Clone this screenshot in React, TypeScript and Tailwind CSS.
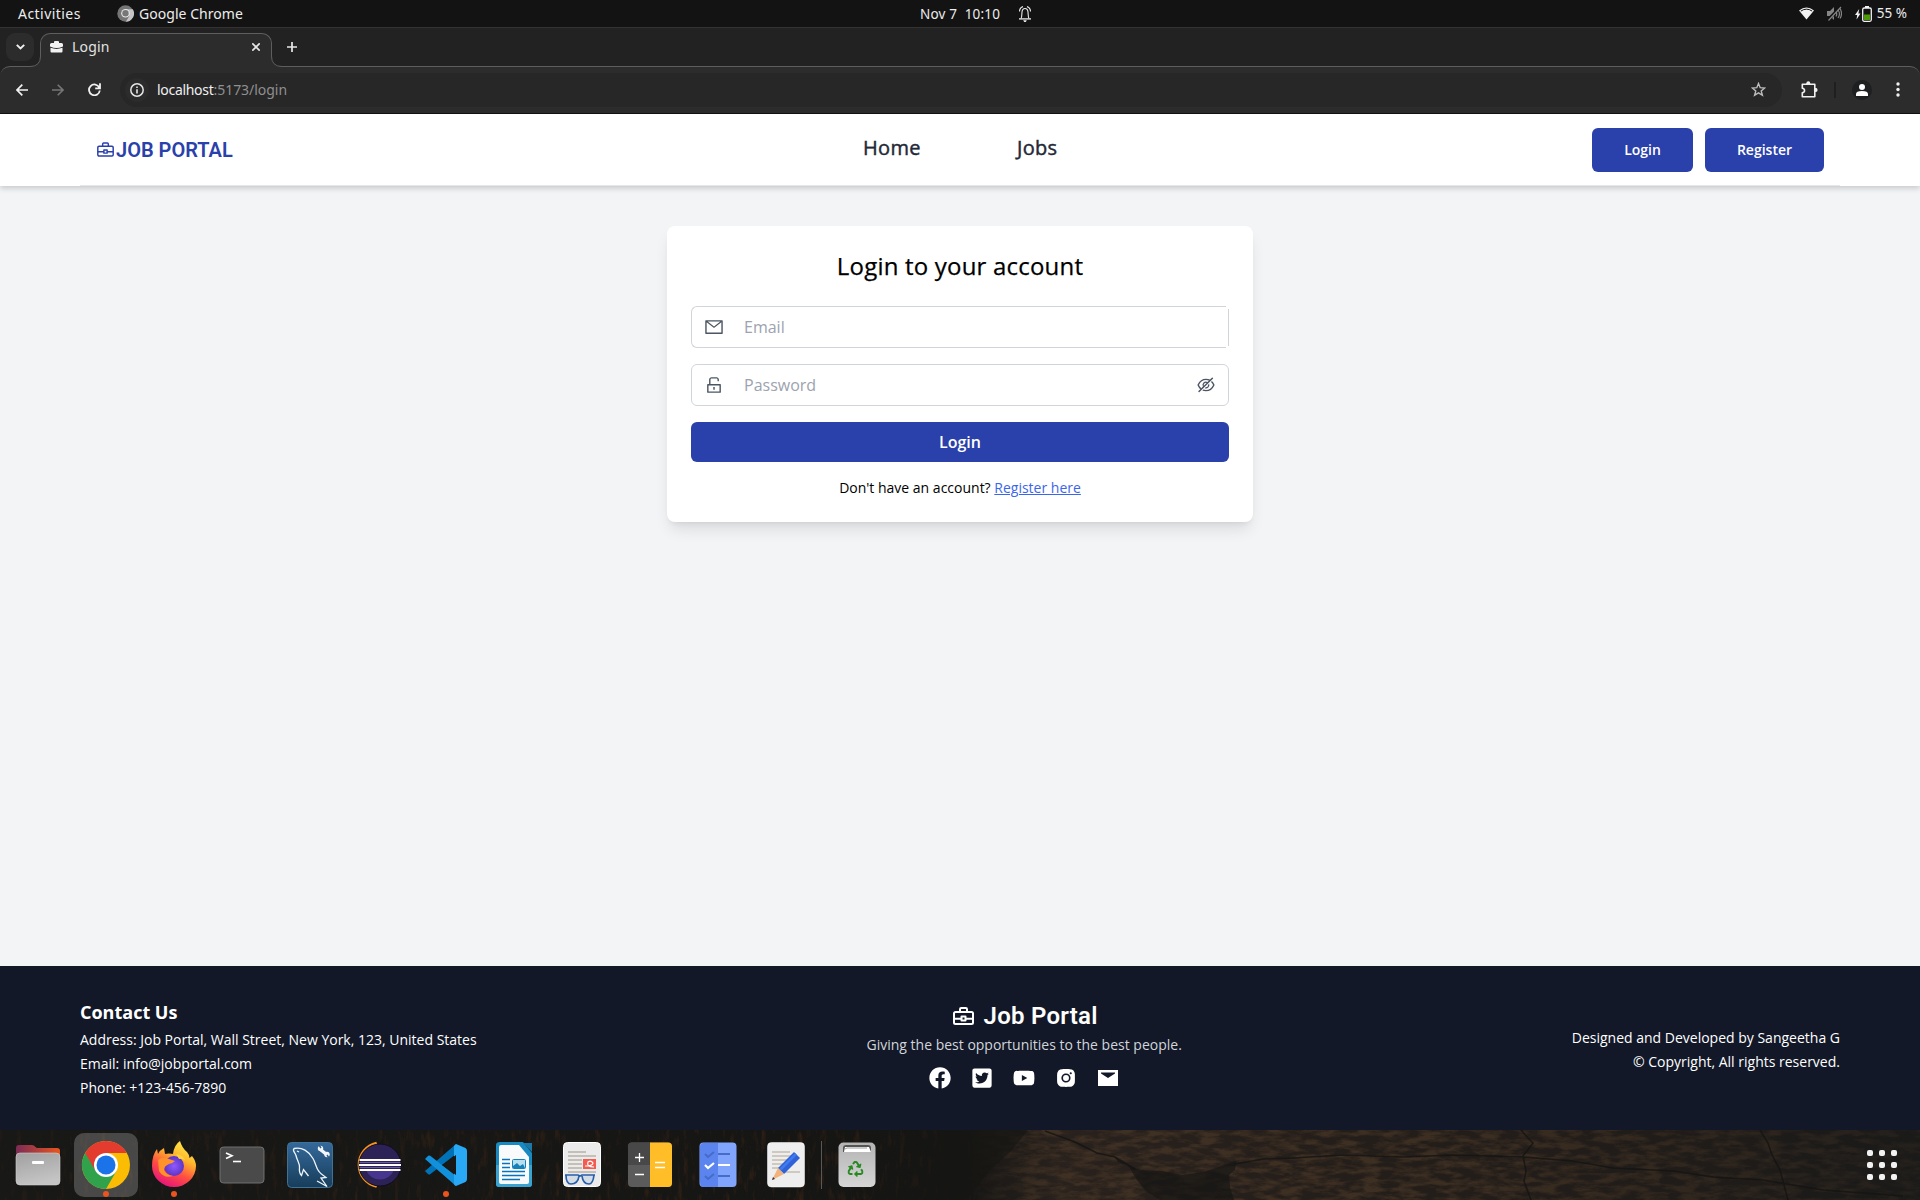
import * as React from 'react';
import { AiOutlineMail, AiOutlineUnlock, AiOutlineEyeInvisible } from 'react-icons/ai';
import { FaFacebook, FaTwitterSquare, FaYoutube, FaRecycle } from 'react-icons/fa';
import { BiLogoInstagramAlt } from 'react-icons/bi';

function Briefcase({ className, stroke = 2 }: { className?: string; stroke?: number }) {
  return (
    <svg viewBox="0 0 21 18" className={className} fill="none" stroke="currentColor" strokeWidth={stroke} strokeLinejoin="round">
      <path d="M2.5 5h16a1.5 1.5 0 0 1 1.5 1.5v9a1.5 1.5 0 0 1-1.5 1.5h-16A1.5 1.5 0 0 1 1 15.500v-9A1.500 1.500 0 0 1 2.500 5Z" />
      <path d="M7 5V2.200Q7 1 8.200 1h4.600Q14 1 14 2.200V5M1 11.700h7M13 11.700h7M8.500 9.500h4v4h-4Z" />
    </svg>
  );
}

function SystemBar() {
  return (
    <div className="grid h-[28px] grid-cols-3 border-b border-[#333333] bg-[#131313] font-['Noto_Sans',sans-serif] text-[14px] leading-[27px] text-[#ededed]">
      <div className="flex items-center pl-[18px]">
        <span className="w-[99px] text-[14px] tracking-[0.45px]">Activities</span>
        <svg className="mr-[5px] h-[17px] w-[17px] shrink-0" viewBox="0 0 17 17">
          <circle cx="8.500" cy="8.500" r="8.200" fill="#757575" />
          <path d="M8.500 4.200h7.300a8.200 8.200 0 0 1-7 12.500L12.300 11Z" fill="#c4c4c4" />
          <circle cx="8.500" cy="8.300" r="4.300" fill="#e9e9e9" />
          <circle cx="8.500" cy="8.300" r="3.200" fill="#777777" />
        </svg>
        <span className="tracking-[0.04px]">Google Chrome</span>
      </div>
      <div className="flex items-center pl-[280px]">
        <span className="w-[99px] whitespace-pre text-[13.5px] leading-[26px] tracking-[0.2px]">Nov 7  10:10</span>
        <svg className="h-[16px] w-[12px]" viewBox="0 0 12 16" fill="none" stroke="#ededed" strokeWidth="1.100">
          <path d="M0 12.900h12" strokeWidth="1.300" />
          <path d="M2 12.500c1-1.200.8-4.500 1-6.500.2-2 1.300-3.500 3-3.500s2.800 1.500 3 3.500c.2 2 0 5.300 1 6.500M.5 5.500C.6 3 2 1.200 4 .6M11.500 5.500C11.400 3 10 1.200 8 .6" />
          <path d="M4.200 14.200h3.600L6.800 16H5.200Z" fill="#ededed" stroke="none" />
        </svg>
      </div>
      <div className="flex items-center justify-end pr-[13px]">
        <svg className="mr-[13px] h-[13px] w-[15px]" viewBox="0 0 15 13">
          <path d="M7.500 12.500L0 3.500Q7.500-2.500 15 3.500Z" fill="#f2f2f2" />
          <path d="M1.800 4.100Q7.500.2 13.200 4.100" fill="none" stroke="#131313" strokeWidth="1" />
        </svg>
        <svg className="mr-[13px] h-[15px] w-[15px]" viewBox="0 0 15 15" fill="none" stroke="#858585" strokeWidth="1.200">
          <path d="M0 5h3l4-4v13l-4-4H0Z" fill="#858585" stroke="none" />
          <path d="M.5 14.500L14 .5" stroke="#131313" strokeWidth="3" />
          <path d="M1.500 14.500L14 1M9 5.500q1.500 2.500 0 5M11 4q3 4 0 8M13 2.500q3 5 0 10" />
        </svg>
        <svg className="mr-[5px] h-[16px] w-[17px]" viewBox="0 0 17 16">
          <path d="M4.200 3L0 9h2.200L1.500 13.500 5.500 7.500H3.400Z" fill="#f2f2f2" />
          <rect x="7.700" y="2" width="8.600" height="13.300" rx="1.500" fill="none" stroke="#f2f2f2" strokeWidth="1.300" />
          <path d="M10 0h4v2h-4Z" fill="#f2f2f2" />
          <rect x="9" y="8.500" width="6" height="5.500" fill="#4e9a06" />
        </svg>
        <span className="text-[13.500px]">55 %</span>
      </div>
    </div>
  );
}

function Browser() {
  return (
    <div className="h-[86px] bg-[#222222] font-['Noto_Sans',sans-serif] text-[14px]">
      <div className="flex h-[38px] pl-[6px] pt-[5px]">
        <div className="flex h-[28px] w-[28px] items-center justify-center rounded-[9px] bg-[#2c2c2c]">
          <svg className="h-[6px] w-[9px]" viewBox="0 0 9 6" fill="none" stroke="#f0f0f0" strokeWidth="1.900"><path d="M.8.800L4.500 4.500 8.200.8" /></svg>
        </div>
        <div className="relative z-10 ml-[6px] flex h-[34px] w-[232px] items-center rounded-t-[10px] border border-b-0 border-[#5e5e5e] bg-[#2c2c2c] pb-[7px] pl-[9px] text-[#e3e3e3]">
          <svg className="absolute -left-[11px] bottom-0 h-[11px] w-[12px]" viewBox="0 0 12 11"><path d="M0 10.500Q10.500 10.500 10.500 0H12V11H0Z" fill="#2c2c2c" /><path d="M0 10.500Q10.500 10.500 10.500 0" fill="none" stroke="#5e5e5e" /></svg>
          <svg className="absolute -right-[11px] bottom-0 h-[11px] w-[12px]" viewBox="0 0 12 11"><path d="M12 10.500Q1.500 10.500 1.500 0H0V11H12Z" fill="#2c2c2c" /><path d="M12 10.500Q1.500 10.500 1.500 0" fill="none" stroke="#5e5e5e" /></svg>
          <svg className="h-[12px] w-[13px]" viewBox="0 0 13 12" fill="#f1f1f1"><path d="M4 2V1Q4 0 5 0h3q1 0 1 1v1h2.500Q13 2 13 3.500v2Q9.500 7 6.500 7T0 5.500v-2Q0 2 1.500 2Z" /><path d="M.5 6.800Q6.500 9 12.500 6.800V10.500Q12.500 11.500 11.500 11.500h-10Q.5 11.500.5 10.500Z" /></svg>
          <span className="ml-[9px] pb-px leading-[18px] tracking-[0.2px]">Login</span>
          <svg className="ml-auto mr-[11px] h-[8px] w-[8px]" viewBox="0 0 8 8" stroke="#e8e8e8" strokeWidth="1.600"><path d="M.3.300l7.400 7.400M7.700.300L.3 7.700" /></svg>
        </div>
        <svg className="ml-[15px] mt-[9px] h-[10px] w-[10px]" viewBox="0 0 10 10" stroke="#e8e8e8" strokeWidth="1.700"><path d="M5 0v10M0 5h10" /></svg>
      </div>
      <div className="flex h-[48px] items-center rounded-t-[10px] border-b border-t border-b-[#111111] border-t-[#5e5e5e] bg-[#2c2c2c] pb-px pl-[16px] pr-[20px] text-[#f1f1f1]">
        <svg className="h-[12px] w-[12px]" viewBox="0 0 12 12" fill="none" stroke="currentColor" strokeWidth="1.700"><path d="M12 6H1.200M6.300.700L1 6l5.300 5.300" /></svg>
        <svg className="ml-[24px] h-[12px] w-[12px] text-[#757575]" viewBox="0 0 12 12" fill="none" stroke="currentColor" strokeWidth="1.600"><path d="M0 6h10.800M5.700.700L11 6l-5.300 5.300" /></svg>
        <svg className="ml-[24px] h-[13px] w-[13px]" viewBox="0 0 13 13" fill="none" stroke="currentColor" strokeWidth="1.800"><path d="M11.300 4.500A5.400 5.400 0 1 0 11.800 7.500M12 .3v5H7.200" /></svg>
        <div className="ml-[19px] flex h-[34px] w-[1662px] items-center rounded-full bg-[#272727] pl-[5px] pr-[16px]">
          <div className="flex h-[24px] w-[24px] items-center justify-center rounded-full bg-[#2c2c2c]">
            <svg className="h-[14px] w-[14px]" viewBox="0 0 14 14" fill="none" stroke="#e6e6e6" strokeWidth="1.500"><circle cx="7" cy="7" r="6.200" /><path d="M7 6.200v4.300M7 3.500V5" strokeWidth="1.600" /></svg>
          </div>
          <span className="ml-[8px] text-[14px] -tracking-[0.300px] text-[#f0f0f0]">localhost</span>
          <span className="text-[14px] -tracking-[0.030px] text-[#8f8f8f]">:5173/login</span>
          <svg className="ml-auto h-[15px] w-[15px]" viewBox="0 0 15 15" fill="none" stroke="#bdbdbd" strokeWidth="1.400"><path d="M7.500 1.500l1.700 4.200 4.500.3-3.500 2.900 1.200 4.400-3.900-2.400-3.900 2.400 1.200-4.400L1.300 6l4.500-.3Z" /></svg>
        </div>
        <svg className="ml-[19px] h-[17px] w-[17px]" viewBox="0 0 17 17"><path d="M1.300 3.300h5v-1h2v1h5.500v4.500h1v2h-1v5.900H1.300v-3.900c3-.5 3-4 0-4.500Z" fill="none" stroke="#f1f1f1" strokeWidth="1.600" strokeLinejoin="round" /><circle cx="7.300" cy="2.200" r="1.900" fill="#f1f1f1" /><circle cx="14.700" cy="9" r="1.900" fill="#f1f1f1" /></svg>
        <span className="ml-[16px] h-[16px] w-[2px] bg-[#1f1f1f]" />
        <div className="ml-[16px] flex h-[20px] w-[20px] items-center justify-center rounded-full bg-[#1d1f20]">
          <svg className="h-[12px] w-[12px]" viewBox="0 0 12 12" fill="#ffffff"><circle cx="6" cy="3.100" r="3" /><path d="M0 12V10Q0 7 6 7t6 3v2Z" /></svg>
        </div>
        <svg className="ml-auto h-[15px] w-[4px]" viewBox="0 0 4 15" fill="#f1f1f1"><circle cx="2" cy="2" r="1.700" /><circle cx="2" cy="7.500" r="1.700" /><circle cx="2" cy="13" r="1.700" /></svg>
      </div>
    </div>
  );
}

function Navbar() {
  return (
    <nav className="z-10 h-[72px] bg-white px-20 shadow-[0_2px_6px_rgba(0,0,0,0.2)]">
      <div className="flex h-full items-center border-b border-[#e5e7eb] px-4 text-[#1f2937]">
        <div className="flex w-[767px] items-center text-[#2a40aa]">
          <Briefcase className="ml-[1px] h-[15px] w-[17px]" stroke={1.800} />
          <span className="ml-[2px] font-['Roboto',sans-serif] text-[20px] font-semibold leading-none">JOB PORTAL</span>
        </div>
        <a className="w-[154px] pb-[3px] text-[20px] font-medium tracking-[0.3px] [-webkit-text-stroke:0.45px_#1f2937]">Home</a>
        <a className="pb-[3px] text-[20px] font-medium tracking-[0.3px] [-webkit-text-stroke:0.45px_#1f2937]">Jobs</a>
        <div className="ml-auto flex gap-3 text-sm font-semibold text-white">
          <button className="h-[44px] w-[101px] rounded-md bg-[#2a40aa]">Login</button>
          <button className="h-[44px] w-[119px] rounded-md bg-[#2a40aa]">Register</button>
        </div>
      </div>
    </nav>
  );
}

function LoginCard() {
  return (
    <main className="flex h-[780px] justify-center bg-[#f3f4f6] pt-10">
      <section className="h-[296px] w-[586px] rounded-lg bg-white p-6 shadow-lg">
        <h2 className="mb-6 text-center text-2xl font-medium tracking-[0.2px] text-black [-webkit-text-stroke:0.25px_#000000]">Login to your account</h2>
        <div className="flex flex-col gap-4">
          <div className="flex h-[42px] items-center">
            <div className="flex h-[42px] grow items-center rounded-l-md border border-r-0 border-[#d1d5db] pl-[12px]">
              <AiOutlineMail className="h-5 w-5 text-[#4b5563]" />
              <span className="ml-[20px] grow text-base text-[#9ca3af]">Email</span>
            </div>
            <span className="ml-[2px] h-[37px] w-px bg-[#d1d5db]" />
          </div>
          <div className="flex h-[42px] items-center rounded-md border border-[#d1d5db] pl-[12px] pr-[12px]">
            <AiOutlineUnlock className="h-5 w-5 text-[#4b5563]" />
            <span className="ml-[20px] grow text-base text-[#9ca3af]">Password</span>
            <AiOutlineEyeInvisible className="h-5 w-5 text-[#4b5563]" />
          </div>
          <button className="h-10 rounded-md bg-[#2a40aa] text-base font-semibold text-white">Login</button>
          <p className="text-center text-sm text-black">Don&apos;t have an account? <a className="text-[#3b66eb] underline">Register here</a></p>
        </div>
      </section>
    </main>
  );
}

function Footer() {
  return (
    <footer className="flex h-[164px] items-center justify-between bg-[#121827] px-20 text-sm leading-6 text-white">
      <div className="pt-[2px]">
        <h3 className="mb-[2px] text-lg font-bold leading-[28px]">Contact Us</h3>
        <p>Address: Job Portal, Wall Street, New York, 123, United States</p>
        <p>Email: info@jobportal.com</p>
        <p>Phone: +123-456-7890</p>
      </div>
      <div className="flex flex-col items-center pb-[8px]">
        <div className="flex h-8 items-center pl-[2px]">
          <Briefcase className="mr-[10px] h-[18px] w-[21px]" />
          <span className="font-['Roboto',sans-serif] text-[24px] font-semibold leading-8 tracking-[0.25px]">Job Portal</span>
        </div>
        <p className="mt-px text-[#d1d5db]">Giving the best opportunities to the best people.</p>
        <div className="mt-[10px] flex h-[22px] items-center gap-5">
          <FaFacebook className="h-[22px] w-[22px]" />
          <FaTwitterSquare className="h-[22px] w-[22px]" />
          <FaYoutube className="h-[22px] w-[22px]" />
          <BiLogoInstagramAlt className="h-[22px] w-[22px] scale-[1.080]" />
          <svg viewBox="0 0 22 22" className="h-[22px] w-[22px]" fill="currentColor"><path d="M1 3h20V19H1ZM4 5.600v1L11 11l7-4.400v-1Z" fillRule="evenodd" /></svg>
        </div>
      </div>
      <div className="pt-[4px] text-right">
        <p>Designed and Developed by Sangeetha G</p>
        <p>© Copyright, All rights reserved.</p>
      </div>
    </footer>
  );
}

function DockItem({ children, active, running }: { children: React.ReactNode; active?: boolean; running?: boolean }) {
  return (
    <svg className="h-[70px] w-[68px] shrink-0" viewBox="0 0 68 70">
      {active && <rect x="2" y="3" width="64" height="64" rx="10" fill="#ffffff" opacity="0.210" />}
      {children}
      {running && <circle cx="34" cy="64" r="3" fill="#e95420" />}
    </svg>
  );
}

function Wallpaper() {
  return (
    <svg className="absolute inset-0 h-full w-full" viewBox="0 0 1920 70" preserveAspectRatio="none">
      <defs>
        <filter id="stone" x="0" y="0" width="100%" height="100%" colorInterpolationFilters="sRGB">
          <feTurbulence type="fractalNoise" baseFrequency="0.050 0.160" numOctaves="5" seed="7" />
          <feColorMatrix values="0 0 0 0 0.340  0 0 0 0 0.250  0 0 0 0 0.170  3 1.500 0 0 -1.850" />
        </filter>
        <filter id="grass" x="0" y="0" width="100%" height="100%" colorInterpolationFilters="sRGB">
          <feTurbulence type="fractalNoise" baseFrequency="0.180 0.050" numOctaves="4" seed="4" />
          <feColorMatrix values="0 0 0 0 0.360  0 0 0 0 0.200  0 0 0 0 0.080  3 0 0 0 -1.550" />
        </filter>
        <linearGradient id="ground" x1="0" x2="1" y1="0" y2="0">
          <stop offset="0" stopColor="#181817" /><stop offset="0.500" stopColor="#151514" /><stop offset="0.550" stopColor="#28211d" />
          <stop offset="0.700" stopColor="#241e1a" /><stop offset="0.870" stopColor="#201c19" /><stop offset="1" stopColor="#1a1a19" />
        </linearGradient>
        <linearGradient id="stoneFade" x1="0" x2="1" y1="0" y2="0"><stop offset="0" stopColor="#000000" /><stop offset="0.080" stopColor="#ffffff" /><stop offset="0.500" stopColor="#ffffff" /><stop offset="1" stopColor="#555555" /></linearGradient>
        <linearGradient id="grassFade" x1="0" x2="1" y1="0" y2="0"><stop offset="0" stopColor="#666666" /><stop offset="0.800" stopColor="#ffffff" /><stop offset="1" stopColor="#000000" /></linearGradient>
        <mask id="stoneMask"><rect x="970" width="950" height="70" fill="url(#stoneFade)" /></mask>
        <mask id="grassMask"><rect width="1000" height="70" fill="url(#grassFade)" /></mask>
      </defs>
      <rect width="1920" height="70" fill="url(#ground)" />
      <g mask="url(#grassMask)"><rect width="1000" height="70" filter="url(#grass)" opacity="0.400" /></g>
      <g mask="url(#stoneMask)"><rect x="970" width="950" height="70" filter="url(#stone)" opacity="0.500" /></g>
      <path d="M940 0h88l-18 22-20 18-24 30h-26Z" fill="#151513" opacity="0.600" />
      <path d="M1110 20l8 12 22 8 22 1 20 4 22-3 32-11-1 9-6 5 1 12 4 13h-74l-14-9-9-11-8-13-14-10Z" fill="#151514" opacity="0.700" />
      <path d="M1045 1l30 11 22 11 18 4 20 12M1235 34l28-5 30-1 50-3 60 2 50-2 70 2 50 4 40 7 60 3 40 6 50 3 60 10 80 6M1521 0l7 8 5 5-10 13 3 15-2 10 7 19M1760 0l8 13 4 12 8 15 8 30" fill="none" stroke="#141413" strokeWidth="1.600" opacity="0.800" />
    </svg>
  );
}

function Dock() {
  return (
    <div className="relative h-[70px] overflow-hidden bg-[#181817]">
      <Wallpaper />
      <div className="relative flex h-full items-center pl-1">
        <DockItem>
          <defs>
            <linearGradient id="fb" x1="0" x2="1"><stop stopColor="#7c2b55" /><stop offset="1" stopColor="#e9551f" /></linearGradient>
            <linearGradient id="ff" x1="0" x2="0.300" y1="0" y2="1"><stop stopColor="#a0a0a0" /><stop offset="1" stopColor="#c4c4c4" /></linearGradient>
          </defs>
          <path d="M12 18q0-3 3-3h13q2 0 3 1.500T34 18h19q3 0 3 3v12H12Z" fill="url(#fb)" />
          <rect x="12" y="23" width="44" height="32" rx="4" fill="url(#ff)" stroke="#d2d2d2" strokeWidth="0.600" />
          <rect x="28" y="31" width="12" height="3" rx="1" fill="#fff" />
        </DockItem>
        <DockItem active running>
          <circle cx="34" cy="35" r="24" fill="#fbbc04" />
          <path d="M34 35L13.200 23A24 24 0 0 0 34 59L44.400 41Z" fill="#31a24c" />
          <path d="M34 23h20.800A24 24 0 0 0 13.200 23L23.600 41 34 35Z" fill="#e33b2e" />
          <circle cx="34" cy="35" r="12" fill="#fff" /><circle cx="34" cy="35" r="9.500" fill="#1a73e8" />
        </DockItem>
        <DockItem running>
          <defs>
            <linearGradient id="fx" x1="0.800" x2="0.300" y1="0" y2="1"><stop stopColor="#fff44f" /><stop offset="0.350" stopColor="#ffb52b" /><stop offset="0.650" stopColor="#ff4e42" /><stop offset="1" stopColor="#e5127d" /></linearGradient>
            <radialGradient id="fg"><stop stopColor="#9059ff" /><stop offset="1" stopColor="#5b35c7" /></radialGradient>
          </defs>
          <path d="M12 36Q12 25 17 19L18 24Q20 20 24 18L25 24Q29 23 33 24 34 15 40 11 42 18 47 22 49 24 49.500 28L52 26Q56 31 56 36A22 21 0 0 1 12 36Z" fill="url(#fx)" />
          <circle cx="34" cy="36" r="10" fill="url(#fg)" />
          <path d="M18 30q4-3 8-2l9 3q-3 3-6 3 -5 2-5 6 2 5 9 6-9 3-14-5Z" fill="#ff922a" />
          <path d="M36 24q6 0 10 7-4-3-7-2Z" fill="#ffd43b" />
        </DockItem>
        <DockItem>
          <rect x="12" y="17" width="44" height="36" rx="3.500" fill="#4a4a4a" stroke="#777" strokeWidth="0.900" />
          <path d="M18 23l6 2.700-6 2.700" fill="none" stroke="#fff" strokeWidth="1.600" /><path d="M25 31.500h8" stroke="#fff" strokeWidth="1.600" />
        </DockItem>
        <DockItem>
          <defs><linearGradient id="ms" x1="0" x2="0" y1="0" y2="1"><stop stopColor="#34699b" /><stop offset="1" stopColor="#173d5a" /></linearGradient></defs>
          <rect x="11.500" y="12.500" width="45" height="45" rx="4" fill="url(#ms)" stroke="#3f7395" />
          <path d="M18 18.500c8-2 15 3 19 10 3 5 3 10 6 13 2 3 5 4 7 6l-5 .5 6 8.500-10-5.500M18 18.500c-2 2 1 4 2 7 1 5 4 8 3.500 12-.5 4 0 6 2 8l2-6 5 6.500M21 21l2 1" fill="none" stroke="#edf5fb" strokeWidth="1.300" />
          <path d="M45 20l5 4" stroke="#f4f7fa" strokeWidth="3.500" /><circle cx="44.500" cy="18.500" r="2.700" fill="#f4f7fa" /><circle cx="51" cy="24.500" r="2.700" fill="#f4f7fa" />
          <path d="M43 15l2 3M51 25l2 3" stroke="#2d6190" strokeWidth="1.500" />
        </DockItem>
        <DockItem>
          <path d="M32.500 13A22.300 22.300 0 0 0 32.500 56.600 28 28 0 0 1 32.500 13Z" fill="#f7941e" stroke="#f7941e" strokeWidth="2.500" />
          <circle cx="36" cy="35" r="21" fill="#2c2255" stroke="#110d21" strokeWidth="1" />
          <path d="M22 40a15 15 0 0 0 28 0Z" fill="#46368d" />
          <path d="M15.500 30h41M15 35h42M15.500 40h41" stroke="#fff" strokeWidth="2" />
          <path d="M15.500 32.500h41M15.500 37.500h41" stroke="#6a5aa0" strokeWidth="1" />
        </DockItem>
        <DockItem running>
          <path d="M13 41l3.200 3.200q1 .8 2 0L44 24V14Z" fill="#0072b8" />
          <path d="M13 29l3.200-3.200q1-.8 2 0L44 46v10Z" fill="#1290dc" />
          <path d="M44 14l9.500 4q1.500 1 1.500 3v28q0 2-1.500 3L44 56q-2-1-2-2V16Z" fill="#29a9f5" />
          <path d="M44 25v20L30 35Z" fill="#181817" />
        </DockItem>
        <DockItem>
          <path d="M20 12h23l9 11v31q0 3-3 3H19q-3 0-3-3V15q0-3 4-3Z" fill="#188abf" />
          <path d="M16 35h36v19q0 3-3 3H19q-3 0-3-3Z" fill="#3ba3d2" />
          <path d="M19 17q0-2 2-2h18l10 12v25q0 2-2 2H21q-2 0-2-2Z" fill="#f8fafb" />
          <path d="M43 13h9v9Z" fill="#1b79aa" />
          <path d="M22 29.500h8M22 33.500h8M22 37.500h8M22 41.500h23M22 45.500h23M22 49.500h18" stroke="#0873ba" strokeWidth="1.700" />
          <rect x="32.500" y="29.500" width="13" height="9" rx="1" fill="#b8dfed" stroke="#1681b8" /><path d="M33 38v-2l4-3 3 3 3-2 2 4Z" fill="#1681b8" />
        </DockItem>
        <DockItem>
          <rect x="15.500" y="12.500" width="37" height="44" rx="4" fill="#ebebeb" stroke="#fff" />
          <path d="M20 22h18M20 26h28M20 30h14M20 34h14M20 38h14M20 42h28" stroke="#b9b3a6" strokeWidth="1.600" />
          <rect x="35" y="29" width="13" height="10" fill="#f45b50" /><path d="M37 36q8 0 8-3-2-3-5-1-2 5 6 5" fill="none" stroke="#fff" strokeWidth="1.200" />
          <path d="M17 45h13l2 1 2-1h13M18 45q0 9 5 9 7 0 8-8M34 46q1 8 7 8 4 0 5-9" fill="#bdd0e0" fillOpacity="0.500" stroke="#275eac" strokeWidth="1.700" />
        </DockItem>
        <DockItem>
          <rect x="12" y="12.500" width="44" height="44.500" rx="4" fill="#5b5b5b" /><path d="M12 35V17q0-4.500 4-4.500h18V35Z" fill="#484848" /><path d="M34 12.500h18q4 0 4 4V53q0 4-4 4H34Z" fill="#ffbd28" />
          <path d="M23.500 23v9M19 27.500h9M19 44.500h9M39 32.500h10M39 37.500h10" stroke="#fff" strokeWidth="1.300" />
        </DockItem>
        <DockItem>
          <rect x="15.500" y="12.500" width="37" height="44.500" rx="4" fill="#81a5fd" /><path d="M34 13H20q-4 0-4 4v35q0 5 4 5h14Z" fill="#5c84ee" />
          <path d="M21 24l3 3 6-5M21 46l3 3 6-5M34 24h12M34 46h12" fill="none" stroke="#446cc9" strokeWidth="2" />
          <path d="M21 35l3 3 6-5M34 35h12" fill="none" stroke="#fff" strokeWidth="2.200" />
        </DockItem>
        <DockItem>
          <rect x="15.500" y="12.500" width="37" height="44.500" rx="4" fill="#eeeeee" stroke="#fff" strokeWidth="0.500" />
          <path d="M20 22h18M20 26h21M20 30h17M20 34h14M20 38h10M32 42h16" stroke="#c4beb0" strokeWidth="1.600" />
          <path d="M42 22l6 6-16 16-6-6Z" fill="#2f62d9" /><path d="M44 24l-16 16" stroke="#3f7bef" strokeWidth="2.500" /><path d="M26 38l6 6-12 6Z" fill="#f2b27b" /><path d="M21 47l2 2-3 1Z" fill="#333" />
        </DockItem>
        <div className="mx-px h-[48px] w-px shrink-0 bg-[#585858]" />
        <DockItem>
          <defs><linearGradient id="tr" x1="0" x2="0" y1="0" y2="1"><stop stopColor="#b4b4b4" /><stop offset="1" stopColor="#d5d5d5" /></linearGradient></defs>
          <rect x="15.500" y="12.500" width="37" height="44.500" rx="5" fill="url(#tr)" />
          <path d="M20 22v-4q0-3 3-3h22q3 0 3 3v4Z" fill="#555" /><path d="M21 22l1-5h24l2 5Z" fill="#fff" /><path d="M22 19l2-1h20" stroke="#999" fill="none" />
          <FaRecycle x="24.500" y="31" width="19" height="19" color="#278a20" />
        </DockItem>
        <div className="ml-auto mr-[23px] grid grid-cols-3 gap-[6px]">
          {Array.from({ length: 9 }, (_, i) => <span key={i} className="h-[6px] w-[6px] rounded-[2px] bg-[#f2f2f2]" />)}
        </div>
      </div>
    </div>
  );
}

export default function App() {
  return (
    <div className="flex h-[1200px] w-[1920px] flex-col overflow-hidden font-['Open_Sans',sans-serif]">
      <SystemBar />
      <Browser />
      <Navbar />
      <LoginCard />
      <Footer />
      <Dock />
    </div>
  );
}
